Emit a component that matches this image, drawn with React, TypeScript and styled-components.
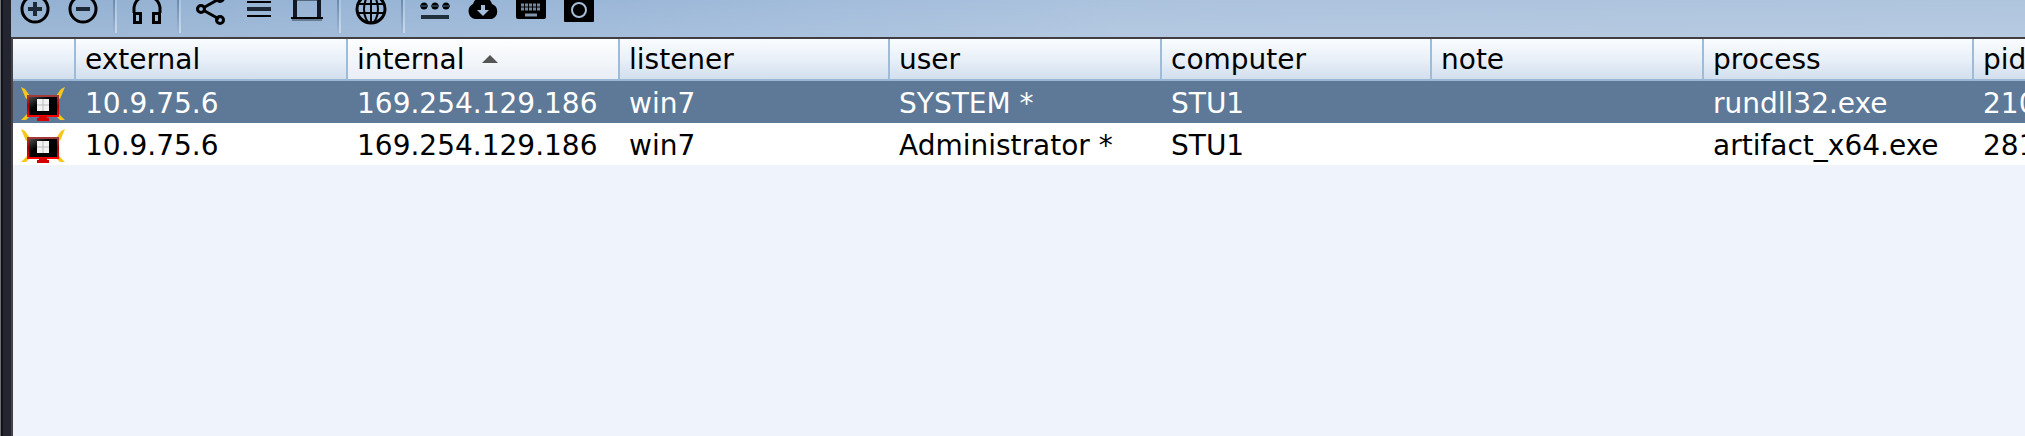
import React from "react";
import styled, { createGlobalStyle } from "styled-components";

const GlobalStyle = createGlobalStyle`
  *, *::before, *::after { box-sizing: border-box; }
  html, body, #root { height: 100%; margin: 0; }
  body {
    overflow: hidden;
    font-family: "DejaVu Sans", sans-serif;
    font-size: 28px;
    color: #000;
  }
`;

const Window = styled.div`
  display: flex;
  min-height: 100vh;
  border-left: 1px solid #6a6d72;
`;

const Edge = styled.div`
  flex: none;
  width: 10px;
  background: #232630;
  border-left: 2px solid #111318;
`;

const Main = styled.main`
  flex: 1;
  min-width: 0;
  display: flex;
  flex-direction: column;
`;

const Toolbar = styled.div`
  display: flex;
  align-items: flex-end;
  height: 37px;
  overflow: hidden;
  background: linear-gradient(to bottom, rgba(255, 255, 255, 0), rgba(255, 255, 255, 0.1)),
    linear-gradient(to right, #94b1d2, #9bb7d8 30%, #acc3de 55%, #afc5de);
`;

const ToolButton = styled.button`
  flex: none;
  display: flex;
  justify-content: center;
  width: 48px;
  padding: 0 0 12px;
  border: 0;
  background: none;
  color: #000;
`;

const Separator = styled.div`
  flex: none;
  width: 4px;
  height: 40px;
  margin: 0 6px 4px;
  background:
    linear-gradient(to bottom, #5f80a6, #9db8d6) left / 2px 100% no-repeat,
    linear-gradient(to bottom, #a5bfda, #c8d7e8) right / 2px 100% no-repeat;
`;

const TablePane = styled.section`
  flex: 1;
  min-width: 0;
  overflow: hidden;
  border-top: 2px solid #403e42;
  border-left: 2px solid #454347;
  background: #eff3fb;
`;

const Table = styled.table`
  width: 100%;
  table-layout: fixed;
  border-collapse: separate;
  border-spacing: 0;
`;

const Col = styled.col<{ $width?: number }>`
  width: ${({ $width }) => ($width ? `${$width}px` : "auto")};
`;

const HeadCell = styled.th<{ $sorted?: boolean }>`
  height: 42px;
  padding: 2px 0 0 9px;
  overflow: hidden;
  border-right: 2px solid #9ebbd8;
  border-bottom: 2px solid #9ab8d6;
  background: ${({ $sorted }) =>
    $sorted
      ? "linear-gradient(to bottom, #fdfeff, #e9eef5)"
      : "linear-gradient(to bottom, #fafcff, #e9f0f8 50%, #d2dfed)"};
  font-weight: 400;
  line-height: 32px;
  text-align: left;
  white-space: nowrap;
  &:last-child { border-right: 0; }
`;

const SortMark = styled.svg`
  width: 16px;
  height: 8px;
  margin-left: 18px;
  vertical-align: 6px;
`;

const Row = styled.tr<{ $selected?: boolean }>`
  background: ${({ $selected }) => ($selected ? "#5d7997" : "#fff")};
  color: ${({ $selected }) => ($selected ? "#fff" : "#000")};
`;

const Cell = styled.td`
  height: 42px;
  padding: 4px 0 0 9px;
  overflow: hidden;
  line-height: 32px;
  white-space: nowrap;
`;

const IconCell = styled(Cell)`
  padding: 4px 0 0 8px;
  line-height: 0;
`;

const Glyph = ({ children }: { children: React.ReactNode }) => (
  <svg width="32" height="32" viewBox="0 0 32 32" fill="none" stroke="currentColor" strokeWidth="2" aria-hidden="true">
    {children}
  </svg>
);

const tools: ({ label: string; art: React.ReactNode } | null)[] = [
  {
    label: "Connect",
    art: (
      <>
        <circle cx="16" cy="16" r="13" strokeWidth="3" />
        <path d="M9 16h14M16 9v14" stroke="#1d2935" strokeWidth="4" />
      </>
    ),
  },
  {
    label: "Disconnect",
    art: (
      <>
        <circle cx="16" cy="16" r="13" strokeWidth="3" />
        <path d="M9 16h14" stroke="#1d2935" strokeWidth="4" />
      </>
    ),
  },
  null,
  {
    label: "Listeners",
    art: (
      <>
        <path d="M3 20V16a13 13 0 0 1 26 0v4" strokeWidth="3" />
        <path d="M3.5 20.5h6v9h-6zM22.5 20.5h6v9h-6z" strokeWidth="3" />
      </>
    ),
  },
  null,
  {
    label: "Pivot graph",
    art: (
      <>
        <path d="M8 15 24 6M8 17l16 9" strokeWidth="3" />
        <circle cx="6" cy="16" r="3.5" strokeWidth="3" />
        <circle cx="25" cy="5" r="3.5" strokeWidth="3" />
        <circle cx="25" cy="27" r="3.5" strokeWidth="3" />
      </>
    ),
  },
  {
    label: "Session table",
    art: (
      <>
        <path d="M4 9h24M4 23h24" />
        <path d="M4 16h24" stroke="#1c2733" strokeWidth="4" />
      </>
    ),
  },
  {
    label: "Target table",
    art: (
      <>
        <path d="M2 5h28v19h-4V7.5H6V24H2z" fill="#111a24" stroke="none" />
        <path d="M0 25h32" />
        <path d="M1 27h30" stroke="#667b92" />
      </>
    ),
  },
  null,
  {
    label: "Web drive-by",
    art: (
      <>
        <circle cx="16" cy="16" r="14" strokeWidth="3" />
        <ellipse cx="16" cy="16" rx="7" ry="14" />
        <path d="M16 2v28M2 11h28M2 20h28" />
      </>
    ),
  },
  null,
  {
    label: "Credentials",
    art: (
      <>
        <g fill="currentColor" stroke="none">
          <circle cx="5" cy="13" r="3.5" />
          <circle cx="16" cy="13" r="3.5" />
          <circle cx="27" cy="13" r="3.5" />
        </g>
        <path d="M1 13h30" stroke="#2a3947" strokeDasharray="8 3" />
        <path d="M2 24h28" stroke="#20303a" strokeWidth="4" />
      </>
    ),
  },
  {
    label: "Downloads",
    art: (
      <>
        <path d="M8 26a8 8 0 0 1-2-15 10 10 0 0 1 19 0 8 8 0 0 1 0 15z" fill="currentColor" stroke="none" />
        <path d="M16 12v6" stroke="#a4bedb" strokeWidth="4" />
        <path d="M10 17h12l-6 6z" fill="#a4bedb" stroke="none" />
      </>
    ),
  },
  {
    label: "Keystrokes",
    art: (
      <>
        <rect x="1" y="4" width="30" height="22" rx="2" fill="currentColor" stroke="none" />
        <path d="M6 12h20M6 16h20" stroke="#75899e" strokeWidth="3" strokeDasharray="3 1" />
        <path d="M10 22h12" stroke="#8397ac" strokeWidth="3" />
      </>
    ),
  },
  {
    label: "Screenshots",
    art: (
      <>
        <rect x="1" y="3" width="30" height="26" rx="1" fill="currentColor" stroke="none" />
        <circle cx="16" cy="17" r="7" stroke="#a4bedb" />
      </>
    ),
  },
];

const Target = () => (
  <svg width="44" height="34" viewBox="0 0 44 34" aria-hidden="true">
    <defs>
      <linearGradient id="screen" x1="0" y1="0" x2="1" y2="1">
        <stop offset="0" stopColor="#555" />
        <stop offset="0.4" stopColor="#000" />
      </linearGradient>
      <linearGradient id="frame" x1="0" y1="0" x2="0" y2="1">
        <stop offset="0" stopColor="#a33a3a" />
        <stop offset="0.5" stopColor="#a00" />
        <stop offset="1" stopColor="#f00" />
      </linearGradient>
    </defs>
    <path d="M0 0l4 2 5 7-4 3zM44 0l-4 2-5 7 4 3zM0 33l6-6 3 2-4 4zM44 33l-6-6-3 2 4 4z" fill="#f7c61b" />
    <rect x="7" y="9" width="30" height="20" fill="url(#screen)" stroke="url(#frame)" strokeWidth="2" />
    <path d="M18 29h8v2h2v3H16v-3h2z" fill="#d50000" />
    <path d="M16 12h12v12H16z" fill="#f2f2f2" />
    <path d="M22 12v12M16 18h12" stroke="#bbb" />
  </svg>
);

const columns = ["", "external", "internal", "listener", "user", "computer", "note", "process", "pid"];
const widths = [63, 272, 272, 270, 272, 270, 272, 270, undefined];

const sessions = [
  { selected: true, values: ["10.9.75.6", "169.254.129.186", "win7", "SYSTEM *", "STU1", "", "rundll32.exe", "210"] },
  { selected: false, values: ["10.9.75.6", "169.254.129.186", "win7", "Administrator *", "STU1", "", "artifact_x64.exe", "281"] },
];

export default function App() {
  return (
    <Window>
      <GlobalStyle />
      <Edge />
      <Main>
        <Toolbar role="toolbar">
          {tools.map((tool, i) =>
            tool ? (
              <ToolButton key={i} type="button" aria-label={tool.label}>
                <Glyph>{tool.art}</Glyph>
              </ToolButton>
            ) : (
              <Separator key={i} />
            )
          )}
        </Toolbar>
        <TablePane>
          <Table>
            <colgroup>
              {widths.map((width, i) => (
                <Col key={i} $width={width} />
              ))}
            </colgroup>
            <thead>
              <tr>
                {columns.map((name) => (
                  <HeadCell key={name} scope="col" $sorted={name === "internal"}>
                    {name}
                    {name === "internal" && (
                      <SortMark viewBox="0 0 16 8" aria-hidden="true">
                        <path d="M8 0l8 8H0z" fill="#555" />
                      </SortMark>
                    )}
                  </HeadCell>
                ))}
              </tr>
            </thead>
            <tbody>
              {sessions.map((session, i) => (
                <Row key={i} $selected={session.selected}>
                  <IconCell>
                    <Target />
                  </IconCell>
                  {session.values.map((value, j) => (
                    <Cell key={j}>{value}</Cell>
                  ))}
                </Row>
              ))}
            </tbody>
          </Table>
        </TablePane>
      </Main>
    </Window>
  );
}
